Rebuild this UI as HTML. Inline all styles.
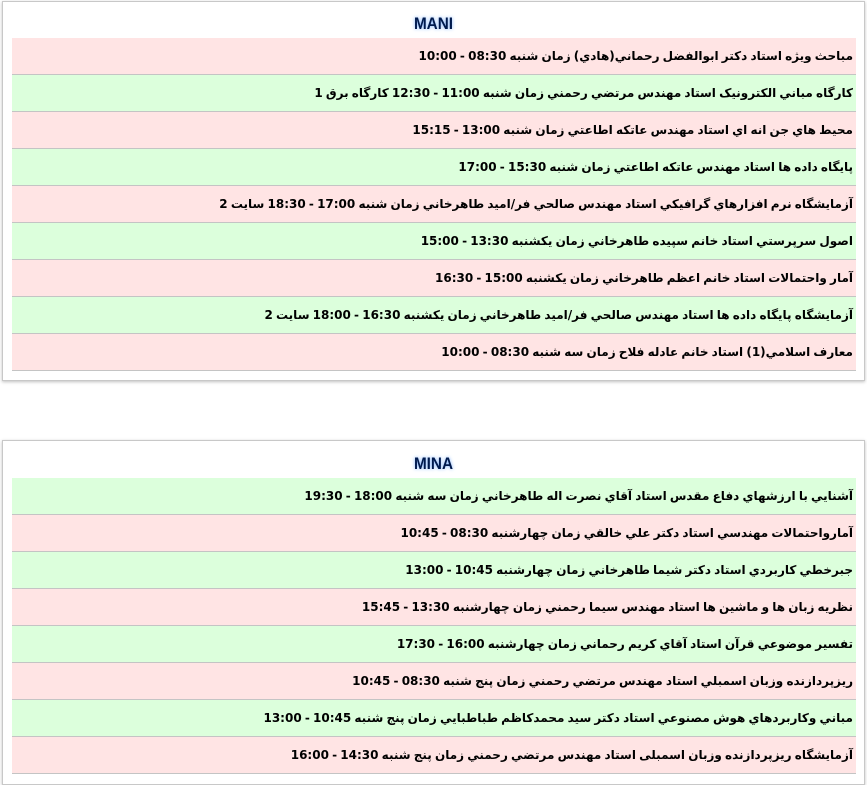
<!DOCTYPE html>
<html><head><meta charset="utf-8"><style>
body{margin:0;background:#fff;width:867px;height:785px;overflow:hidden;font-family:"DejaVu Sans","Noto Sans CJK SC",sans-serif;}
.panel{position:absolute;left:2px;width:861px;border:1px solid #c8c8c8;box-shadow:0 1px 3px rgba(0,0,0,.25);background:#fff;}
.title{position:absolute;left:0;right:0;text-align:center;font-family:"Liberation Sans",sans-serif;font-weight:bold;font-size:17px;color:#001a4d;text-shadow:0 0 4px #7ab0ff;transform:scaleX(0.9);}
.rows{position:absolute;left:9px;width:844px;}
.r{height:36px;border-bottom:1px solid #c4c4c4;direction:rtl;text-align:right;font-size:12px;font-weight:bold;line-height:36px;padding-right:3px;white-space:nowrap;color:#000;letter-spacing:-0.6px;word-spacing:-1px;}
.p{background:#ffe4e4}.g{background:#dcffdc}
</style></head><body>
<div class="panel" style="top:1px;height:378px;">
<div class="title" style="top:12px">MANI</div>
<div class="rows" style="top:36px">
<div class="r p">مباحث ويژه استاد دكتر ابوالفضل رحماني(هادي) زمان شنبه 08:30 - 10:00</div>
<div class="r g">كارگاه مباني الكترونيک استاد مهندس مرتضي رحمني زمان شنبه 11:00 - 12:30 كارگاه برق 1</div>
<div class="r p">محيط هاي جن انه اي استاد مهندس عاتكه اطاعتي زمان شنبه 13:00 - 15:15</div>
<div class="r g">پايگاه داده ها استاد مهندس عاتكه اطاعتي زمان شنبه 15:30 - 17:00</div>
<div class="r p">آزمايشگاه نرم افزارهاي گرافيكي استاد مهندس صالحي فر/اميد طاهرخاني زمان شنبه 17:00 - 18:30 سايت 2</div>
<div class="r g">اصول سرپرستي استاد خانم سپيده طاهرخاني زمان يكشنبه 13:30 - 15:00</div>
<div class="r p">آمار واحتمالات استاد خانم اعظم طاهرخاني زمان يكشنبه 15:00 - 16:30</div>
<div class="r g">آزمايشگاه پايگاه داده ها استاد مهندس صالحي فر/اميد طاهرخاني زمان يكشنبه 16:30 - 18:00 سايت 2</div>
<div class="r p">معارف اسلامي(1) استاد خانم عادله فلاح زمان سه شنبه 08:30 - 10:00</div>
</div></div>
<div class="panel" style="top:440px;height:343px;">
<div class="title" style="top:13px">MINA</div>
<div class="rows" style="top:37px">
<div class="r g">آشنايي با ارزشهاي دفاع مقدس استاد آقاي نصرت اله طاهرخاني زمان سه شنبه 18:00 - 19:30</div>
<div class="r p">آمارواحتمالات مهندسي استاد دكتر علي خالقي زمان چهارشنبه 08:30 - 10:45</div>
<div class="r g">جبرخطي كاربردي استاد دكتر شيما طاهرخاني زمان چهارشنبه 10:45 - 13:00</div>
<div class="r p">نظريه زبان ها و ماشين ها استاد مهندس سيما رحمني زمان چهارشنبه 13:30 - 15:45</div>
<div class="r g">تفسير موضوعي قرآن استاد آقاي كريم رحماني زمان چهارشنبه 16:00 - 17:30</div>
<div class="r p">ريزپردازنده وزبان اسمبلي استاد مهندس مرتضي رحمني زمان پنج شنبه 08:30 - 10:45</div>
<div class="r g">مباني وكاربردهاي هوش مصنوعي استاد دكتر سيد محمدكاظم طباطبايي زمان پنج شنبه 10:45 - 13:00</div>
<div class="r p">آزمايشگاه ريزپردازنده وزبان اسمبلی استاد مهندس مرتضي رحمني زمان پنج شنبه 14:30 - 16:00</div>
</div></div>
</body></html>
